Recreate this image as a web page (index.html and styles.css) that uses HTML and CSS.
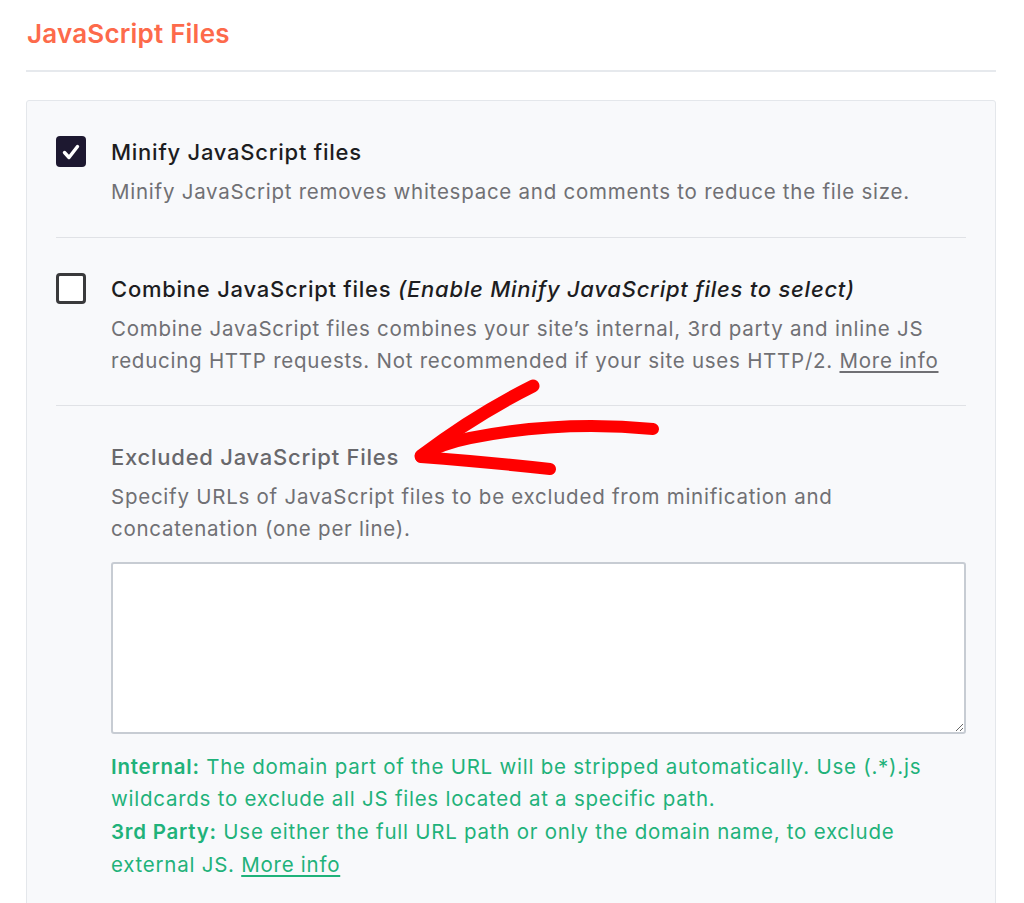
FILE: index.html
```html
<!DOCTYPE html>
<html lang="en">
<head>
<meta charset="utf-8">
<title>JavaScript Files</title>
<link rel="stylesheet" href="styles.css">
</head>
<body>
<div class="page">
  <h2 class="section-title">JavaScript Files</h2>
  <div class="card">
    <div class="option">
      <span class="checkbox checked">
        <svg viewBox="0 0 30 30" width="30" height="30"><path d="M8.5 15.5l4.5 5 8.5-11" fill="none" stroke="#fff" stroke-width="3.4" stroke-linecap="round" stroke-linejoin="round"/></svg>
      </span>
      <div class="option-body">
        <div class="option-label">Minify JavaScript files</div>
        <p class="option-desc">Minify JavaScript removes whitespace and comments to reduce the file size.</p>
      </div>
    </div>
    <div class="option">
      <span class="checkbox"></span>
      <div class="option-body">
        <div class="option-label">Combine JavaScript files <em>(Enable Minify JavaScript files to select)</em></div>
        <p class="option-desc">Combine JavaScript files combines your site’s internal, 3rd party and inline JS reducing HTTP requests. Not recommended if your site uses HTTP/2. <a href="#" class="more">More info</a></p>
      </div>
    </div>
    <div class="field">
      <div class="field-title">Excluded JavaScript Files</div>
      <p class="option-desc">Specify URLs of JavaScript files to be excluded from minification and concatenation (one per line).</p>
      <textarea class="field-input"></textarea>
      <p class="hint"><strong>Internal:</strong> The domain part of the URL will be stripped automatically. Use (.*).js wildcards to exclude all JS files located at a specific path.<br><strong>3rd Party:</strong> Use either the full URL path or only the domain name, to exclude external JS. <a href="#" class="more green">More info</a></p>
    </div>
  </div>
</div>
<svg class="arrow" width="1024" height="903" viewBox="0 0 1024 903">
  <g fill="none" stroke="#ff0000" stroke-linecap="round" stroke-linejoin="round">
    <path d="M653 429 C 600 424, 540 424, 470 438 C 450 442, 432 449, 421 456" stroke-width="12"/>
    <path d="M533 386 C 495 405, 455 430, 421 456" stroke-width="13"/>
    <path d="M421 457 C 460 460, 505 464, 550 469" stroke-width="12"/>
  </g>
</svg>
</body>
</html>
```

FILE: styles.css
```css
* { box-sizing: border-box; }
html, body { margin: 0; padding: 0; background: #ffffff; }
body {
  font-family: Inter, "Noto Sans", "Liberation Sans", sans-serif;
  position: relative;
  height: 903px;
  overflow: hidden;
}
.page {
  padding: 0 28px 0 26px;
}
.section-title {
  margin: 0;
  padding: 18px 0 20px 1px;
  font-size: 26px;
  line-height: 32px;
  font-weight: 600;
  letter-spacing: 0.2px;
  color: #fd6a4b;
  border-bottom: 2px solid #e6e9ed;
}
.card {
  margin-top: 28px;
  background: #f8f9fb;
  border: 1px solid #e4e7eb;
  border-radius: 3px;
  padding: 35px 29px 40px 29px;
  min-height: 900px;
}
.option {
  display: flex;
  gap: 25px;
  padding-bottom: 28px;
  border-bottom: 1px solid #e0e2e6;
  margin-bottom: 35px;
}
.option + .option { padding-bottom: 27px; }
.checkbox {
  flex: 0 0 30px;
  width: 30px;
  height: 31px;
  border-radius: 4px;
  border: 3px solid #3a3a3c;
  background: #fff;
  display: flex;
  align-items: center;
  justify-content: center;
}
.checkbox.checked {
  background: #1d1830;
  border: none;
}
.option-body { flex: 1; }
.option-label {
  font-size: 22px;
  line-height: 32px;
  font-weight: 500;
  letter-spacing: 0.75px;
  color: #1d1d1f;
}
.option-label em { font-weight: 500; }
.option-desc {
  margin: 8px 0 0;
  font-size: 20.5px;
  line-height: 32.5px;
  color: #707074;
  letter-spacing: 0.75px;
}
.more { color: #707074; text-decoration: underline; text-underline-offset: 3px; }
.field { padding-left: 55px; }
.field-title {
  font-size: 22px;
  line-height: 32px;
  font-weight: 500;
  letter-spacing: 0.75px;
  color: #68686c;
}
.field-input {
  display: block;
  width: 100%;
  height: 172px;
  margin-top: 16px;
  background: #fff;
  border: 2px solid #c7ccd3;
  border-radius: 3px;
  resize: vertical;
}
.hint {
  margin: 17px 0 0;
  font-size: 20.5px;
  line-height: 32.7px;
  color: #1fb27a;
  letter-spacing: 0.75px;
}
.hint strong { font-weight: 600; }
.more.green { color: #1fb27a; }
.arrow {
  position: absolute;
  left: 0;
  top: 0;
  pointer-events: none;
}
```
